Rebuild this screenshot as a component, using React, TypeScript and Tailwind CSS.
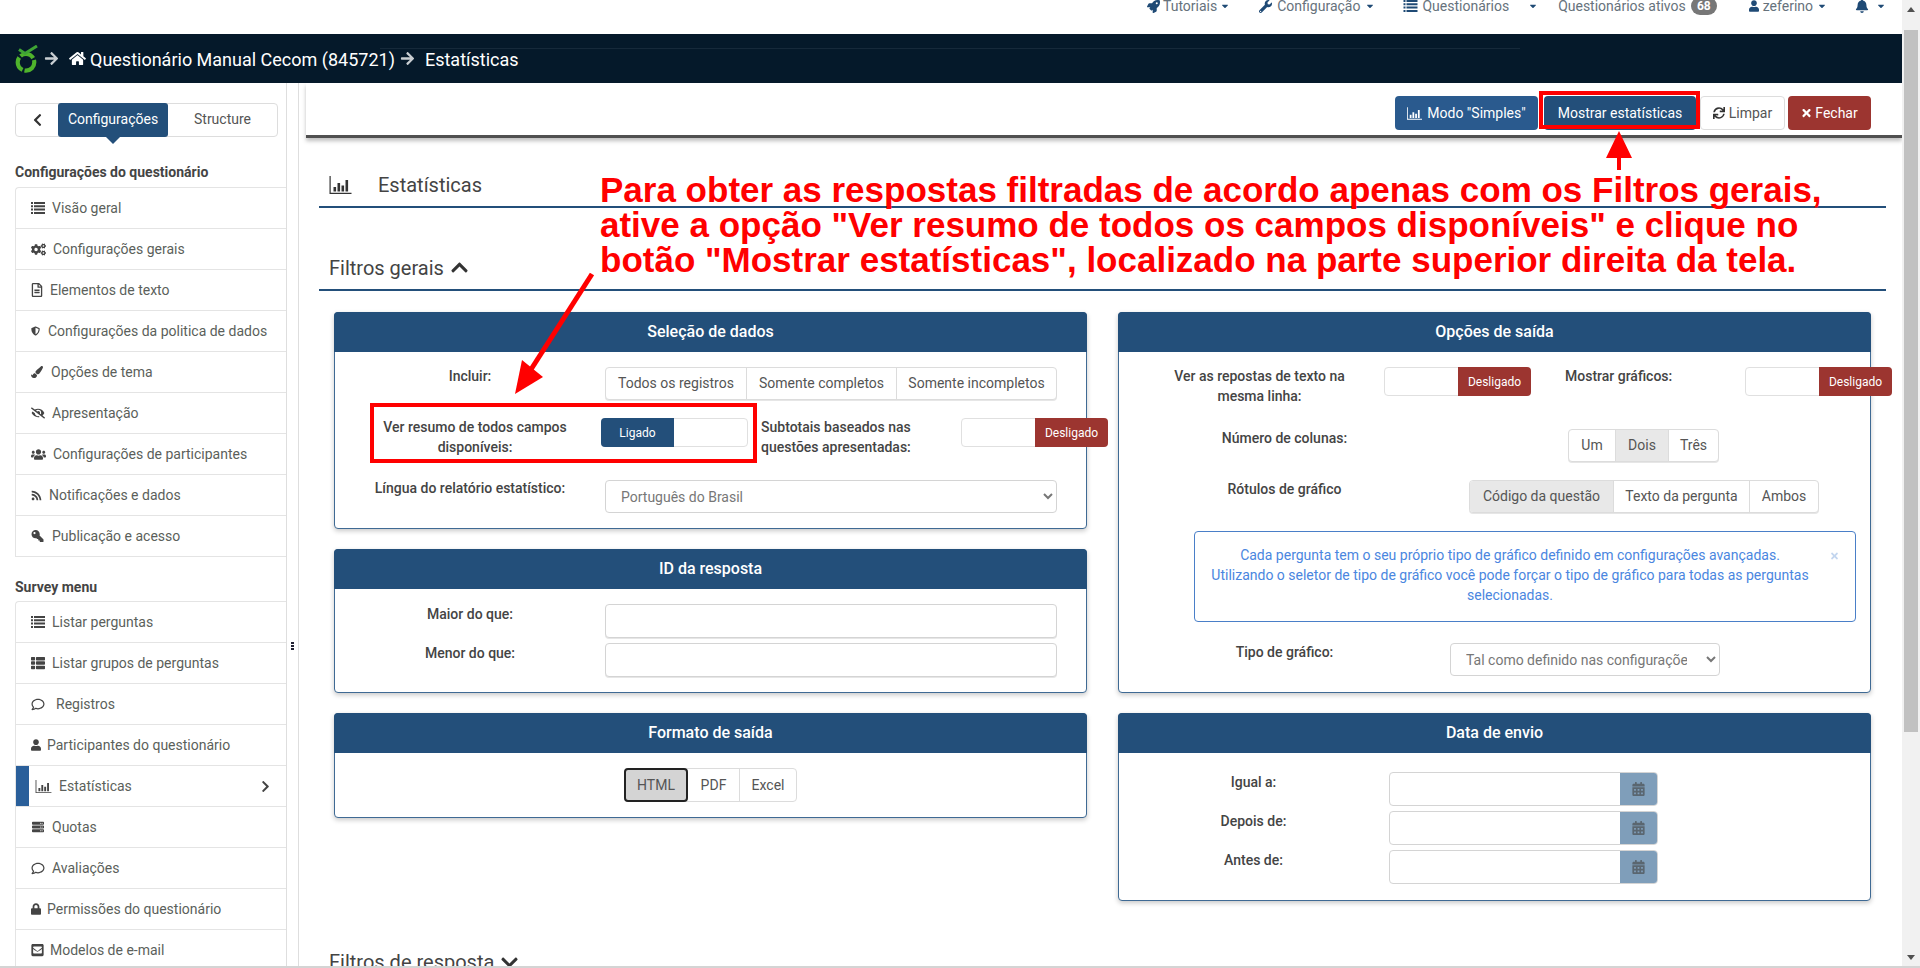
import React from "react";
import {
  FaRocket, FaWrench, FaUser, FaBell, FaHome, FaArrowRight, FaSync, FaTimes,
  FaChevronLeft, FaChevronRight, FaChevronUp, FaChevronDown, FaCogs, FaRegFileAlt, FaShieldAlt, FaPaintBrush,
  FaEyeSlash, FaUsers, FaRss, FaKey, FaThList, FaRegComment, FaServer, FaLock, FaEnvelopeSquare, FaCalendarAlt, FaCaretDown,
} from "react-icons/fa";

function ListIcon({ className = "" }: { className?: string }) {
  return (
    <svg viewBox="0 0 14 14" className={className} fill="currentColor">
      <path d="M0 1h2v2H0zM3 1h11v2H3zM0 4.3h2v2H0zM3 4.3h11v2H3zM0 7.6h2v2H0zM3 7.6h11v2H3zM0 10.9h2v2H0zM3 10.9h11v2H3z" />
    </svg>
  );
}

function ChartIcon({ className = "" }: { className?: string }) {
  return (
    <svg viewBox="0 0 22 18" className={className} fill="currentColor">
      <path d="M0 0h1.2v16.8H22V18H0z" />
      <path d="M4 11h2.6v4.5H4zM8 7h2.6v8.5H8zM12 9.5h2.6v6H12zM16 4h2.6v11.5H16z" />
    </svg>
  );
}

type Item = { t: string; I: React.ComponentType<{ className?: string }>; icon: string; text: string };

const menu1: Item[] = [
  { t: "Visão geral", I: ListIcon, icon: "w-[14px] h-[14px]", text: "ml-[7px]" },
  { t: "Configurações gerais", I: FaCogs, icon: "w-[15px] h-[13px]", text: "ml-[7px]" },
  { t: "Elementos de texto", I: FaRegFileAlt, icon: "w-[12px] h-[14px]", text: "ml-[7px]" },
  { t: "Configurações da politica de dados", I: FaShieldAlt, icon: "w-[9px] h-[12px]", text: "ml-[8px]" },
  { t: "Opções de tema", I: FaPaintBrush, icon: "w-[12px] h-[12px]", text: "ml-[8px]" },
  { t: "Apresentação", I: FaEyeSlash, icon: "w-[14px] h-[12px]", text: "ml-[7px]" },
  { t: "Configurações de participantes", I: FaUsers, icon: "w-[15px] h-[13px]", text: "ml-[7px]" },
  { t: "Notificações e dados", I: FaRss, icon: "w-[11px] h-[11px]", text: "ml-[7px]" },
  { t: "Publicação e acesso", I: FaKey, icon: "w-[13px] h-[12px] -scale-x-100", text: "ml-[8px]" },
];

const menu2: Item[] = [
  { t: "Listar perguntas", I: ListIcon, icon: "w-[14px] h-[14px]", text: "ml-[7px]" },
  { t: "Listar grupos de perguntas", I: FaThList, icon: "w-[14px] h-[14px]", text: "ml-[7px]" },
  { t: "Registros", I: FaRegComment, icon: "w-[14px] h-[13px]", text: "ml-[11px]" },
  { t: "Participantes do questionário", I: FaUser, icon: "w-[10px] h-[12px]", text: "ml-[6px]" },
];

const menu3: Item[] = [
  { t: "Quotas", I: FaServer, icon: "w-[14px] h-[12px]", text: "ml-[7px]" },
  { t: "Avaliações", I: FaRegComment, icon: "w-[14px] h-[13px]", text: "ml-[7px]" },
  { t: "Permissões do questionário", I: FaLock, icon: "w-[10px] h-[12px]", text: "ml-[6px]" },
  { t: "Modelos de e-mail", I: FaEnvelopeSquare, icon: "w-[13px] h-[14px]", text: "ml-[6px]" },
];

function Row({ it }: { it: Item }) {
  const I = it.I;
  return (
    <div className="h-[41px] flex items-center pl-[15px] border-b border-[#e4e4e4] text-[14px] text-[#5b5f5b]">
      <I className={`${it.icon} shrink-0 text-[#444]`} />
      <span className={it.text}>{it.t}</span>
    </div>
  );
}

function Panel({ title, children }: { title: string; children: React.ReactNode }) {
  return (
    <div className="border border-[#3f6a94] rounded-[4px] bg-white shadow-[0_2px_5px_rgba(0,0,0,0.22)]">
      <div className="h-[40px] -m-px mb-0 rounded-t-[4px] bg-[#234f7a] text-white text-[16px] font-medium flex items-center justify-center">
        {title}
      </div>
      {children}
    </div>
  );
}

function Group({ items, active, wrap }: { items: { t: string; c: string }[]; active?: number; wrap: string }) {
  return (
    <div className={`flex h-[33px] shrink-0 border border-[#dcdcdc] rounded-[4px] bg-white shadow-[0_1px_0_#e6e6e6] text-[14px] text-[#555] overflow-hidden ${wrap}`}>
      {items.map((x, i) => (
        <div
          key={x.t}
          className={`${x.c} flex items-center justify-center ${i > 0 ? "border-l border-[#dcdcdc]" : ""} ${active === i ? "bg-[#e8e8e8]" : ""}`}
        >
          {x.t}
        </div>
      ))}
    </div>
  );
}

function Off({ className = "" }: { className?: string }) {
  return (
    <div className={`w-[147px] h-[29px] flex shrink-0 border border-[#e0e0e0] rounded-[4px] bg-white ${className}`}>
      <div className="flex-1" />
      <div className="w-[73px] -my-px -mr-px rounded-r-[4px] bg-[#9c3530] text-white text-[12px] flex items-center justify-center">Desligado</div>
    </div>
  );
}

function TextInput() {
  return <div className="w-[452px] h-[34px] shrink-0 border border-[#d4d4d4] rounded-[4px] bg-white shadow-[0_1px_0_#e6e6e6]" />;
}

function DateRow({ label }: { label: string }) {
  return (
    <div className="flex items-start">
      <div className="w-[270px] shrink-0 text-center pr-[1px] text-[14px] leading-5 font-medium text-[#444]">{label}</div>
      <div className="w-[269px] h-[34px] flex shrink-0 border border-[#d4d4d4] rounded-[4px] overflow-hidden bg-white">
        <div className="flex-1" />
        <div className="w-[37px] bg-[#7f9eba] flex items-center justify-center">
          <FaCalendarAlt className="w-[13px] h-[14px] text-[#5a6670]" />
        </div>
      </div>
    </div>
  );
}

function Caret({ className = "" }: { className?: string }) {
  return <FaCaretDown className={`w-[10px] h-[10px] text-[#1f4a75] ${className}`} />;
}

function Logo() {
  return (
    <svg viewBox="0 0 24 28" className="w-[24px] h-[28px]">
      <circle cx="12" cy="17.3" r="8.3" fill="none" stroke="#4fb32c" strokeWidth="4.2" strokeDasharray="14.5 2" />
      <path d="M5 4.5 L11 8.5 L23 1" fill="none" stroke="#3fa535" strokeWidth="3" />
    </svg>
  );
}

export default function App() {
  return (
    <div className="relative flex h-[968px] w-[1920px] overflow-hidden border-b-2 border-[#d4d4d4] bg-white font-['Roboto',sans-serif] text-[#444]">
      <div className="w-[1902px] shrink-0 flex flex-col">
        {/* top nav */}
        <div className="h-[34px] overflow-hidden shrink-0">
          <div className="-mt-[4px] h-[20px] flex items-center pl-[1147px] text-[14px] text-[#66727c]">
            <FaRocket className="w-[13px] h-[13px] text-[#1f4a75]" />
            <span className="ml-[3px]">Tutoriais</span>
            <Caret className="ml-[3px]" />
            <FaWrench className="ml-[29px] w-[13px] h-[13px] text-[#1f4a75]" />
            <span className="ml-[5px]">Configuração</span>
            <Caret className="ml-[5px]" />
            <ListIcon className="ml-[28px] w-[15px] h-[14px] text-[#1f4a75]" />
            <span className="ml-[4px]">Questionários</span>
            <Caret className="ml-[19px]" />
            <span className="ml-[20px]">Questionários ativos</span>
            <span className="ml-[5px] w-[26px] h-[18px] rounded-full bg-[#777] text-white text-[12px] font-bold flex items-center justify-center">68</span>
            <FaUser className="ml-[32px] w-[10px] h-[12px] text-[#1f4a75]" />
            <span className="ml-[4px]">zeferino</span>
            <Caret className="ml-[4px]" />
            <FaBell className="ml-[28px] w-[14px] h-[14px] text-[#1f4a75]" />
            <Caret className="ml-[7px]" />
          </div>
        </div>

        {/* breadcrumb bar */}
        <div className="relative h-[49px] shrink-0 bg-[#05192a] flex items-center pl-[14px] text-white text-[18px]">
          <div className="absolute left-[380px] right-[382px] top-[14px] h-px bg-[#16293a]" />
          <Logo />
          <FaArrowRight className="ml-[6px] w-[15px] h-[15px] text-[#c9ced2]" />
          <FaHome className="ml-[10px] w-[17px] h-[15px]" />
          <span className="ml-[4px] mt-[1px]">Questionário Manual Cecom (845721)</span>
          <FaArrowRight className="ml-[5px] w-[15px] h-[15px] text-[#c9ced2]" />
          <span className="ml-[10px] mt-[2px]">Estatísticas</span>
        </div>

        <div className="flex flex-1 min-h-0">
          {/* sidebar */}
          <div className="w-[287px] shrink-0 pl-[15px] pt-[20px] border-r border-[#dedede] overflow-hidden">
            <div className="relative w-[263px] h-[34px] flex border border-[#ddd] rounded-[4px] text-[14px]">
              <div className="w-[42px] flex items-center justify-center">
                <FaChevronLeft className="w-[11px] h-[14px] text-[#333]" />
              </div>
              <div className="relative w-[110px] -my-px pb-[2px] bg-[#234f7a] rounded-[3px] text-white flex items-center justify-center">
                Configurações
                <span className="absolute left-1/2 -ml-[7px] top-full w-0 h-0 border-x-[7px] border-x-transparent border-t-[7px] border-t-[#234f7a]" />
              </div>
              <div className="flex-1 pb-[2px] flex items-center justify-center text-[#555]">Structure</div>
            </div>
            <div className="mt-[25px] h-[20px] leading-5 text-[14px] font-bold text-[#444]">Configurações do questionário</div>
            <div className="mt-[5px] border-l border-t border-[#e4e4e4] rounded-tl-[4px]">
              {menu1.map((it) => <Row key={it.t} it={it} />)}
            </div>
            <div className="mt-[20px] h-[20px] leading-5 text-[14px] font-bold text-[#444]">Survey menu</div>
            <div className="mt-[4px] border-l border-t border-[#e4e4e4] rounded-tl-[4px]">
              {menu2.map((it) => <Row key={it.t} it={it} />)}
              <div className="h-[41px] flex items-center border-b border-[#e4e4e4] text-[14px] text-[#5b5f5b]">
                <div className="w-[13px] self-stretch bg-[#2a5f9a]" />
                <ChartIcon className="ml-[6px] w-[17px] h-[13px] text-[#444]" />
                <span className="ml-[7px]">Estatísticas</span>
                <FaChevronRight className="ml-auto mr-[16px] w-[9px] h-[13px] text-[#444]" />
              </div>
              {menu3.map((it) => <Row key={it.t} it={it} />)}
            </div>
          </div>

          {/* gutter */}
          <div className="relative w-[12px] shrink-0 border-r border-[#dedede]">
            <div className="absolute left-[4px] top-[559px] flex flex-col gap-[1px]">
              <span className="w-[3px] h-[2px] bg-[#223]" />
              <span className="w-[3px] h-[2px] bg-[#223]" />
              <span className="w-[3px] h-[2px] bg-[#223]" />
            </div>
          </div>

          {/* main */}
          <div className="flex-1 min-w-0 pl-[7px] overflow-hidden">
            <div className="h-[55px] pt-[13px] pr-[31px] flex justify-end items-start gap-[3px] border-b-[3px] border-[#505050] shadow-[0_3px_4px_rgba(0,0,0,0.25)] text-[14px]">
              <div className="w-[143px] h-[34px] rounded-[4px] bg-[#2a5a8e] text-white flex items-center justify-center">
                <ChartIcon className="w-[15px] h-[13px] mr-[5px]" />Modo "Simples"
              </div>
              <div className="ml-[3px] w-[152px] h-[34px] rounded-[4px] bg-[#234f7a] text-white flex items-center justify-center">Mostrar estatísticas</div>
              <div className="ml-[1px] w-[85px] h-[34px] rounded-[4px] border border-[#ddd] bg-white text-[#555] flex items-center justify-center">
                <FaSync className="w-[12px] h-[12px] mr-[4px] text-[#333]" />Limpar
              </div>
              <div className="w-[83px] h-[34px] rounded-[4px] bg-[#9c3530] text-white flex items-center justify-center">
                <FaTimes className="w-[11px] h-[12px] mr-[3px]" />Fechar
              </div>
            </div>

            <div className="pl-[13px] pr-[16px]">
              <div className="mt-[27px] h-[43px] border-b-2 border-[#234f7a] flex items-center pl-[10px] pb-[2px] text-[20px] text-[#444]">
                <ChartIcon className="w-[23px] h-[18px] text-[#333]" />
                <span className="ml-[26px]">Estatísticas</span>
              </div>
              <div className="mt-[40px] h-[43px] border-b-2 border-[#234f7a] flex items-center pl-[10px] pb-[2px] text-[20px] text-[#444]">
                Filtros gerais
                <FaChevronUp className="ml-[6px] w-[19px] h-[19px] text-[#333]" />
              </div>

              <div className="mt-[21px] px-[15px] flex gap-[31px] items-start">
                <div className="w-[753px] shrink-0 flex flex-col gap-[20px]">
                  <Panel title="Seleção de dados">
                    <div className="pt-[15px] pb-[15px]">
                      <div className="flex items-start">
                        <div className="w-[270px] shrink-0 text-center text-[14px] leading-5 font-medium -mt-px">Incluir:</div>
                        <Group
                          wrap="w-[452px]"
                          items={[
                            { t: "Todos os registros", c: "w-[140px]" },
                            { t: "Somente completos", c: "w-[150px]" },
                            { t: "Somente incompletos", c: "flex-1" },
                          ]}
                        />
                      </div>
                      <div className="mt-[18px] flex items-start">
                        <div className="ml-[34px] w-[212px] shrink-0 text-center text-[14px] leading-5 font-medium -mt-px">Ver resumo de todos campos disponíveis:</div>
                        <div className="ml-[20px] w-[147px] h-[29px] flex shrink-0 border border-[#e0e0e0] rounded-[4px] bg-white">
                          <div className="w-[73px] -my-px -ml-px rounded-l-[4px] bg-[#234f7a] text-white text-[12px] flex items-center justify-center">Ligado</div>
                        </div>
                        <div className="ml-[13px] w-[200px] shrink-0 text-[14px] leading-5 font-medium -mt-px">Subtotais baseados nas questões apresentadas:</div>
                        <Off />
                      </div>
                      <div className="mt-[23px] flex items-start">
                        <div className="w-[270px] shrink-0 text-center text-[14px] leading-5 font-medium -mt-[2px]">Língua do relatório estatístico:</div>
                        <select className="w-[452px] h-[33px] pl-[11px] border border-[#d4d4d4] rounded-[4px] bg-white text-[14px] text-[#777] font-['Roboto',sans-serif]">
                          <option>Português do Brasil</option>
                        </select>
                      </div>
                    </div>
                  </Panel>
                  <Panel title="ID da resposta">
                    <div className="pt-[15px] pb-[15px] flex flex-col gap-[5px]">
                      <div className="flex items-start">
                        <div className="w-[270px] shrink-0 text-center text-[14px] leading-5 font-medium">Maior do que:</div>
                        <TextInput />
                      </div>
                      <div className="flex items-start">
                        <div className="w-[270px] shrink-0 text-center text-[14px] leading-5 font-medium">Menor do que:</div>
                        <TextInput />
                      </div>
                    </div>
                  </Panel>
                  <Panel title="Formato de saída">
                    <div className="pt-[15px] pb-[15px] flex">
                      <div className="ml-[289px] w-[173px] h-[34px] flex border border-[#dcdcdc] rounded-[4px] text-[14px] text-[#555]">
                        <div className="w-[64px] -my-px -ml-px border-2 border-[#222] rounded-[4px] bg-[#d4d4d4] flex items-center justify-center">HTML</div>
                        <div className="w-[51px] flex items-center justify-center">PDF</div>
                        <div className="flex-1 border-l border-[#dcdcdc] flex items-center justify-center">Excel</div>
                      </div>
                    </div>
                  </Panel>
                </div>

                <div className="w-[753px] shrink-0 flex flex-col gap-[20px]">
                  <Panel title="Opções de saída">
                    <div className="pt-[15px] pb-[16px]">
                      <div className="flex items-start">
                        <div className="ml-[40px] w-[201px] shrink-0 text-center text-[14px] leading-5 font-medium -mt-px">Ver as repostas de texto na mesma linha:</div>
                        <Off className="ml-[24px]" />
                        <div className="ml-[34px] w-[180px] shrink-0 text-[14px] leading-5 font-medium -mt-px">Mostrar gráficos:</div>
                        <Off />
                      </div>
                      <div className="mt-[23px] flex items-start">
                        <div className="w-[331px] shrink-0 text-center text-[14px] leading-5 font-medium -mt-px">Número de colunas:</div>
                        <Group
                          wrap="ml-[118px] w-[151px]"
                          active={1}
                          items={[
                            { t: "Um", c: "w-[46px]" },
                            { t: "Dois", c: "w-[53px]" },
                            { t: "Três", c: "flex-1" },
                          ]}
                        />
                      </div>
                      <div className="mt-[18px] flex items-start">
                        <div className="w-[331px] shrink-0 text-center text-[14px] leading-5 font-medium -mt-px">Rótulos de gráfico</div>
                        <Group
                          wrap="ml-[19px] w-[350px]"
                          active={0}
                          items={[
                            { t: "Código da questão", c: "w-[143px]" },
                            { t: "Texto da pergunta", c: "w-[136px]" },
                            { t: "Ambos", c: "flex-1" },
                          ]}
                        />
                      </div>
                      <div className="relative mt-[18px] ml-[75px] w-[662px] h-[91px] border border-[#4a7fc8] rounded-[4px] text-[14px] leading-5 text-[#4a86e0] text-center pt-[13px] pl-[10px]">
                        <div className="w-[610px]">Cada pergunta tem o seu próprio tipo de gráfico definido em configurações avançadas.<br />Utilizando o seletor de tipo de gráfico você pode forçar o tipo de gráfico para todas as perguntas selecionadas.</div>
                        <FaTimes className="absolute right-[16px] top-[19px] w-[9px] h-[10px] text-[#c3d6ef]" />
                      </div>
                      <div className="mt-[21px] flex items-start">
                        <div className="w-[331px] shrink-0 text-center text-[14px] leading-5 font-medium -mt-px">Tipo de gráfico:</div>
                        <select className="w-[270px] h-[33px] pl-[11px] pr-[16px] border border-[#d4d4d4] rounded-[4px] bg-white text-[14px] text-[#777] font-['Roboto',sans-serif]">
                          <option>Tal como definido nas configurações avançadas</option>
                        </select>
                      </div>
                    </div>
                  </Panel>
                  <Panel title="Data de envio">
                    <div className="pt-[19px] pb-[16px] flex flex-col gap-[5px]">
                      <DateRow label="Igual a:" />
                      <DateRow label="Depois de:" />
                      <DateRow label="Antes de:" />
                    </div>
                  </Panel>
                </div>
              </div>

              <div className="mt-[47px] h-[28px] pl-[10px] flex items-center text-[20px] text-[#444]">
                Filtros de resposta
                <FaChevronDown className="ml-[6px] w-[19px] h-[19px] text-[#333]" />
              </div>
            </div>
          </div>
        </div>
      </div>

      {/* scrollbar */}
      <div className="w-[18px] shrink-0 flex flex-col items-center bg-[#f1f1f1]">
        <div className="h-[30px] w-full flex items-center justify-center pb-[12px]">
          <span className="w-0 h-0 border-x-[4px] border-x-transparent border-b-[5px] border-b-[#505050]" />
        </div>
        <div className="w-[14px] h-[702px] bg-[#c1c1c1]" />
        <div className="mt-auto h-[17px] w-full flex items-center justify-center">
          <span className="w-0 h-0 border-x-[4px] border-x-transparent border-t-[5px] border-t-[#505050]" />
        </div>
      </div>

      {/* annotation overlays */}
      <div className="absolute left-[600px] top-[172px] whitespace-nowrap font-['Liberation_Sans',sans-serif] font-bold text-[35px] leading-[35px] text-[#f00]">
        <div>Para obter as respostas filtradas de acordo apenas com os Filtros gerais,</div>
        <div>ative a opção "Ver resumo de todos os campos disponíveis" e clique no</div>
        <div>botão "Mostrar estatísticas", localizado na parte superior direita da tela.</div>
      </div>
      <div className="absolute left-[1539px] top-[91px] w-[161px] h-[38px] border-[4px] border-[#f00]" />
      <div className="absolute left-[370px] top-[403px] w-[387px] h-[60px] border-[4px] border-[#f00]" />
      <svg className="absolute left-0 top-0 pointer-events-none" width="1920" height="968" viewBox="0 0 1920 968">
        <path d="M592 274 L530 371" stroke="#f00" strokeWidth="5" fill="none" />
        <path d="M515 394 L522 360 L543 377 Z" fill="#f00" />
        <path d="M1619 131 L1632 158 L1621 158 L1621 170 L1617 170 L1617 158 L1606 158 Z" fill="#f00" />
      </svg>
    </div>
  );
}
